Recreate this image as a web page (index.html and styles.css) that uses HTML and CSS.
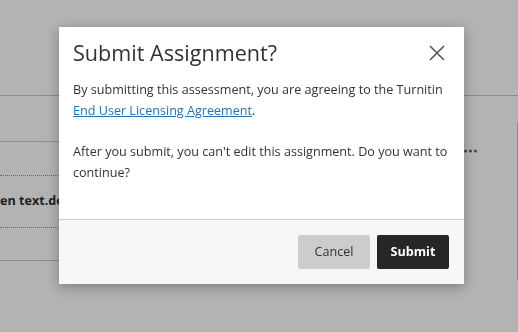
FILE: index.html
```html
<!DOCTYPE html>
<html lang="en">
<head>
  <meta charset="UTF-8">
  <meta name="viewport" content="width=device-width, initial-scale=1.0">
  <title>Submit Assignment</title>
  <link rel="stylesheet" href="styles.css">
</head>
<body>
  <div class="page">
    <header class="page-header"></header>
    <main class="page-main">
      <div class="file-list">
        <div class="file-row">
          <a href="#" class="file-link">en text.docx</a>
        </div>
      </div>
      <div class="side">
        <svg class="more-dots" width="13" height="4" viewBox="0 0 13 4" aria-hidden="true">
          <circle cx="1.6" cy="2" r="1.6" fill="#4a4a4a"/>
          <circle cx="6.5" cy="2" r="1.6" fill="#4a4a4a"/>
          <circle cx="11.4" cy="2" r="1.6" fill="#4a4a4a"/>
        </svg>
        <div class="side-panel"></div>
      </div>
    </main>
  </div>

  <div class="overlay">
    <section class="modal" role="dialog" aria-labelledby="modalTitle">
      <div class="modal-body">
        <div class="modal-head">
          <h2 id="modalTitle">Submit Assignment?</h2>
          <button class="close-btn" aria-label="Close">
            <svg width="16" height="16" viewBox="0 0 16 16">
              <path d="M1 1 L15 15 M15 1 L1 15" stroke="#555" stroke-width="1.6" fill="none"/>
            </svg>
          </button>
        </div>
        <p>By submitting this assessment, you are agreeing to the Turnitin <a href="#">End User Licensing Agreement</a>.</p>
        <p>After you submit, you can't edit this assignment. Do you want to continue?</p>
      </div>
      <div class="modal-footer">
        <button class="btn btn-cancel">Cancel</button>
        <button class="btn btn-submit">Submit</button>
      </div>
    </section>
  </div>
</body>
</html>
```

FILE: styles.css
```css
html, body {
  margin: 0;
  padding: 0;
  height: 100%;
  overflow: hidden;
  font-family: "Open Sans", Arial, sans-serif;
  background-color: #b3b3b3;
}

.page {
  height: 100%;
}
.page-header {
  height: 95px;
  border-bottom: 1px solid #8c8c8c;
}
.page-main {
  display: flex;
  height: 236px;
}
.file-list {
  width: 420px;
  padding-top: 45px;
}
.file-row {
  border-top: 1px solid #8c8c8c;
  border-bottom: 1px solid #8c8c8c;
  padding: 33px 0 32px;
}
.file-link {
  display: block;
  border-top: 1px dotted #9540a8;
  border-bottom: 1px dotted #9540a8;
  padding: 13px 0 14px;
  color: #222;
  font-weight: bold;
  font-size: 12.6px;
  line-height: 24px;
  text-decoration: none;
  white-space: nowrap;
}
.side {
  flex: 1;
  display: flex;
  justify-content: space-between;
  padding-top: 26px;
}
.more-dots {
  margin-left: 44px;
  margin-top: 27px;
}
.side-panel {
  width: 0;
  height: 158px;
  border-left: 1px solid #8c8c8c;
}

.overlay {
  position: fixed;
  top: 0;
  left: 0;
  width: 100%;
  height: 100%;
  z-index: 1000;
}
.modal {
  margin: 27px 0 0 59px;
  width: 405px;
  background-color: white;
  box-shadow: 0 3px 12px rgba(0, 0, 0, 0.3);
}
.modal-body {
  padding: 10px 14px 35px;
  color: #333;
  font-size: 12.6px;
  line-height: 20.8px;
}
.modal-head {
  display: flex;
  justify-content: space-between;
  align-items: center;
  margin-bottom: 11px;
}
.modal-head h2 {
  margin: 0;
  font-size: 21.6px;
  font-weight: normal;
  line-height: 32px;
  color: #333;
}
.close-btn {
  background: none;
  border: none;
  padding: 0;
  margin-right: 5px;
  width: 16px;
  height: 16px;
  cursor: pointer;
}
.modal-body p {
  margin: 0 0 20.8px;
}
.modal-body p:last-child {
  margin-bottom: 0;
}
.modal-body a {
  color: #1f73b7;
}
.modal-footer {
  display: flex;
  justify-content: flex-end;
  gap: 7px;
  padding: 15px;
  background-color: #f7f7f7;
  border-top: 1px solid #cdcdcd;
}
.btn {
  width: 72px;
  height: 34px;
  border: none;
  border-radius: 2px;
  font-family: "Open Sans", Arial, sans-serif;
  font-size: 12.6px;
  cursor: pointer;
}
.btn-cancel {
  background-color: #cccccc;
  color: #333;
}
.btn-submit {
  background-color: #262626;
  color: white;
  font-weight: bold;
}
```
